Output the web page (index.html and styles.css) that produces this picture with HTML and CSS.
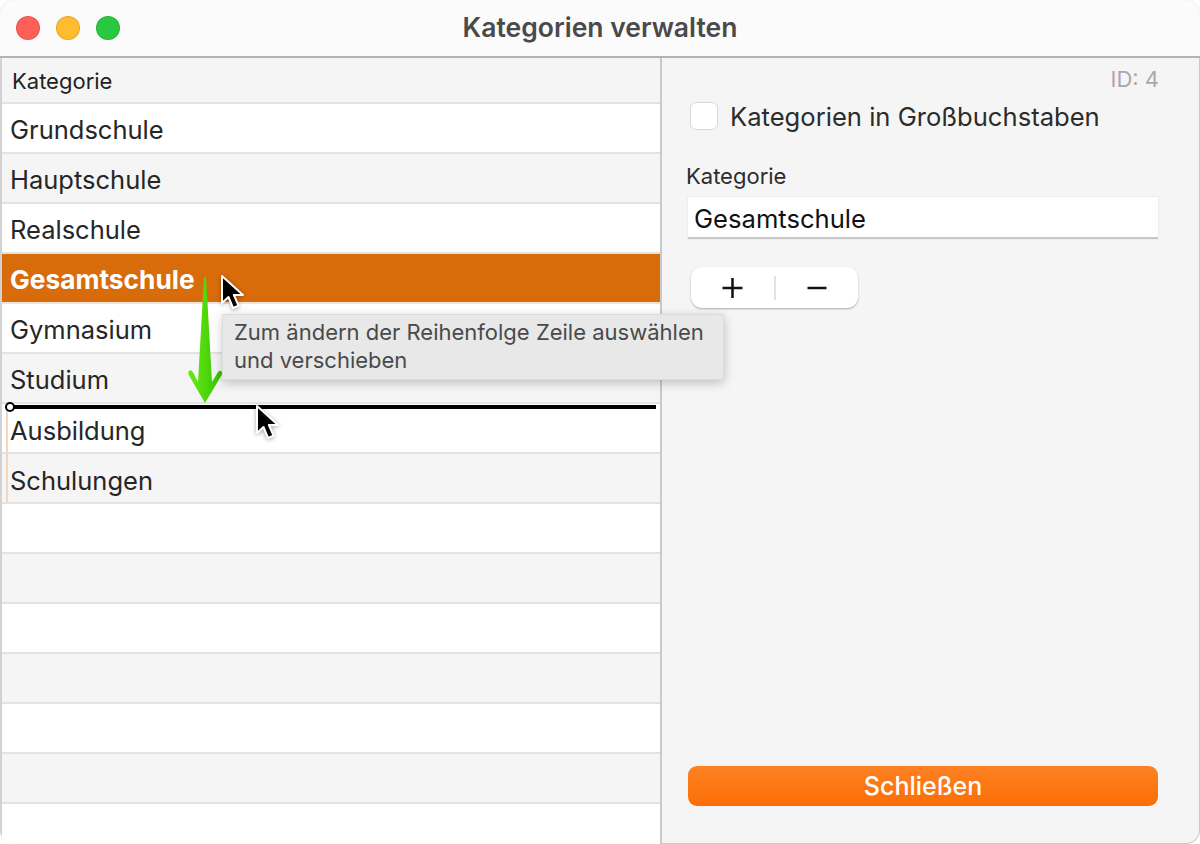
FILE: index.html
```html
<!DOCTYPE html>
<html lang="de">
<head>
<meta charset="utf-8">
<title>Kategorien verwalten</title>
<link rel="stylesheet" href="styles.css">
</head>
<body>
<div class="window">
  <header class="titlebar">
    <div class="lights">
      <span class="light red"></span>
      <span class="light yellow"></span>
      <span class="light green"></span>
    </div>
    <h1 class="title">Kategorien verwalten</h1>
  </header>
  <main class="content">
    <section class="table">
      <div class="thead">Kategorie</div>
      <div class="row">Grundschule</div>
      <div class="row alt">Hauptschule</div>
      <div class="row">Realschule</div>
      <div class="row selected">Gesamtschule</div>
      <div class="row">Gymnasium</div>
      <div class="row alt">Studium</div>
      <div class="row moved">Ausbildung</div>
      <div class="row alt moved">Schulungen</div>
      <div class="row"></div>
      <div class="row alt"></div>
      <div class="row"></div>
      <div class="row alt"></div>
      <div class="row"></div>
      <div class="row alt"></div>
      <div class="row last"></div>
    </section>
    <aside class="panel">
      <div class="record-id">ID: 4</div>
      <label class="check-line"><span class="checkbox"></span><span>Kategorien in Großbuchstaben</span></label>
      <div class="field-label">Kategorie</div>
      <div class="field">Gesamtschule</div>
      <div class="stepper">
        <span class="step"><svg width="22" height="22" viewBox="0 0 22 22"><path d="M11.500 1v20M1.500 11h20" stroke="#111" stroke-width="2.500" fill="none"/></svg></span>
        <span class="step-sep"></span>
        <span class="step"><svg width="22" height="22" viewBox="0 0 22 22"><path d="M1.500 11h19" stroke="#111" stroke-width="2.500" fill="none"/></svg></span>
      </div>
      <div class="spacer"></div>
      <button class="close-btn">Schließen</button>
    </aside>
  </main>

  <div class="drop-line"><span class="drop-dot"></span></div>
  <svg class="arrow" width="36" height="128" viewBox="0 0 36 128">
    <defs><linearGradient id="ag" x1="0" x2="1" y1="0" y2="0"><stop offset="0" stop-color="#6ae816"/><stop offset="0.5" stop-color="#4fd80a"/><stop offset="1" stop-color="#38c004"/></linearGradient></defs>
    <path d="M17 1h2L25 106l6-10q2-2 3.500-.5t.5 3L18 127 1.500 98.500q-1-2 .5-3.500t3.500.5L11 106z" fill="url(#ag)"/>
  </svg>
  <svg class="cursor cursor-a" width="28" height="38" viewBox="0 0 28 38"><path d="M2 1v27l6.500-6 4.500 11 5.500-2.300-4.600-10.700H23z" fill="#000" stroke="#fff" stroke-width="2" stroke-linejoin="round"/></svg>
  <svg class="cursor cursor-b" width="28" height="38" viewBox="0 0 28 38"><path d="M2 1v27l6.500-6 4.500 11 5.500-2.300-4.600-10.700H23z" fill="#000" stroke="#fff" stroke-width="2" stroke-linejoin="round"/></svg>
  <div class="tooltip">Zum ändern der Reihenfolge Zeile auswählen<br>und verschieben</div>
</div>
</body>
</html>
```
FILE: styles.css
```css
* { box-sizing: border-box; }
html, body { margin: 0; height: 100%; background: #ffffff; }
body { font-family: Inter, "Liberation Sans", sans-serif; overflow: hidden; }

.window {
  position: relative;
  width: 1200px;
  height: 844px;
  display: flex;
  flex-direction: column;
  border-radius: 14px;
  overflow: hidden;
  background: #f5f5f6;
  box-shadow: inset 0 0 0 1px #c9c9c9;
}

.titlebar {
  height: 58px;
  flex: none;
  display: flex;
  align-items: center;
  justify-content: center;
  position: relative;
  background: #fbfbfb;
  border-bottom: 2px solid #b3b3b3;
}
.lights { position: absolute; left: 16px; top: 16px; display: flex; gap: 16px; }
.light { width: 24px; height: 24px; border-radius: 50%; border: 1px solid rgba(0,0,0,.1); }
.red { background: #ff5f57; }
.yellow { background: #febc2e; }
.green { background: #28c840; }
.title { margin: 0 0 3px; font-size: 26.500px; font-weight: 600; color: #4a4a4a; letter-spacing: 0; }

.content { flex: 1; display: flex; min-height: 0; }

.table {
  width: 662px;
  flex: none;
  background: #fff;
  border-left: 2px solid #d2d2d2;
  border-right: 2px solid #c9c9c9;
}
.thead {
  height: 46px;
  padding: 2px 0 0 10px;
  display: flex;
  align-items: center;
  font-size: 22px;
  color: #222;
  background: #f5f5f5;
  border-bottom: 2px solid #e2e2e2;
}
.row {
  height: 50px;
  padding: 2px 0 0 8px;
  display: flex;
  align-items: center;
  font-size: 25.500px;
  color: #262626;
  background-color: #fff;
  border-bottom: 2px solid #e3e3e3;
}
.row.alt { background-color: #f5f5f5; }
.row.selected {
  background-color: #d96c0a;
  color: #fff;
  font-size: 26.300px;
  font-weight: 700;
  border-bottom-color: #f0e3d8;
}
.row.moved {
  padding-top: 4px;
  background-image: linear-gradient(#f6d5bd, #f6d5bd);
  background-position: 4px 0;
  background-size: 2px 100%;
  background-repeat: no-repeat;
}
.row.last { border-bottom: 0; }

.panel {
  flex: 1;
  display: flex;
  flex-direction: column;
  padding: 9px 42px 38px 26px;
}
.record-id { margin-right: -1px; text-align: right; font-size: 22px; color: #a9a9a9; height: 24px; line-height: 24px; }
.check-line { display: flex; align-items: center; gap: 12px; margin: 7px 0 0 2px; height: 36px; font-size: 25.600px; color: #2c2c2c; }
.checkbox { width: 28px; height: 28px; background: #fff; border: 1px solid #d8d8d8; border-radius: 6px; }
.field-label { margin: 29px 0 0 -2px; font-size: 22px; color: #2c2c2c; height: 26px; line-height: 26px; }
.field {
  margin-top: 8px;
  height: 42px;
  padding: 2px 0 0 6px;
  display: flex;
  align-items: center;
  font-size: 25.600px;
  color: #111;
  background: #fff;
  border-bottom: 2px solid #c8c8c8;
  box-shadow: 0 0 0 1px #ececec;
}
.stepper {
  margin: 28px 0 0 3px;
  width: 167px;
  height: 41px;
  display: flex;
  align-items: center;
  background: #fff;
  border-radius: 11px;
  box-shadow: 0 1px 2px rgba(0,0,0,.3);
}
.step { flex: 1; display: flex; justify-content: center; align-items: center; }
.step-sep { width: 2px; height: 24px; background: #e2e2e2; }
.spacer { flex: 1; }
.close-btn {
  height: 40px;
  border: 0;
  padding: 0;
  border-radius: 9px;
  font: 500 25px Inter, "Liberation Sans", sans-serif;
  color: #fff;
  background: linear-gradient(#fd8123, #fb6e05);
}

.drop-line { position: absolute; left: 6px; top: 405px; width: 650px; height: 4px; background: #000; }
.drop-dot { position: absolute; left: -1px; top: -3px; width: 10px; height: 10px; border-radius: 50%; background: #fff; border: 2px solid #000; }
.arrow { position: absolute; left: 187px; top: 276px; }
.cursor { position: absolute; filter: drop-shadow(0 1px 2px rgba(0,0,0,.35)); }
.cursor-a { left: 220px; top: 275px; }
.cursor-b { left: 255px; top: 405px; }
.tooltip {
  position: absolute;
  left: 222px;
  top: 314px;
  width: 502px;
  height: 66px;
  padding: 3px 11px;
  font-size: 22px;
  line-height: 28px;
  color: #4a4a4a;
  background: #e8e8e8;
  border: 1px solid #dcdcdc;
  box-shadow: 0 3px 10px rgba(0,0,0,.22);
}
```
